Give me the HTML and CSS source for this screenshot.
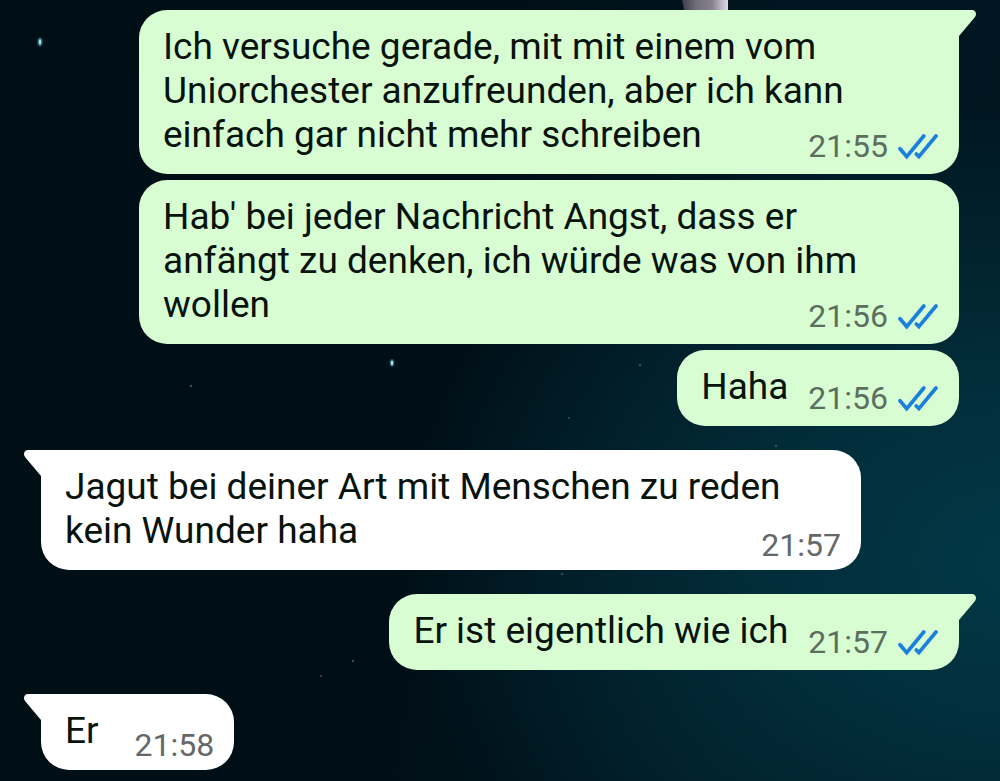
FILE: index.html
```html
<!DOCTYPE html>
<html lang="de">
<head>
<meta charset="utf-8">
<meta name="viewport" content="width=device-width, initial-scale=1">
<title>Chat</title>
<link rel="stylesheet" href="styles.css">
</head>
<body>
<svg class="sky" viewBox="0 0 1000 781" preserveAspectRatio="xMidYMin slice" aria-hidden="true">
  <defs>
    <linearGradient id="plume" x1="0" x2="1" y1="0" y2="0">
      <stop offset="0" stop-color="#3c3b48"/>
      <stop offset=".3" stop-color="#706e79"/>
      <stop offset=".65" stop-color="#85828d"/>
      <stop offset=".85" stop-color="#b9b5c4"/>
      <stop offset="1" stop-color="#dddbe8"/>
    </linearGradient>
  </defs>
  <path d="M682 0h46v14h-43z" fill="url(#plume)"/>
  <ellipse cx="40" cy="42" rx="3" ry="5" fill="#174a59"/>
  <ellipse cx="40" cy="42" rx="1.4" ry="3" fill="#a5e2e5"/>
  <ellipse cx="392" cy="363" rx="2.6" ry="4" fill="#174a59"/>
  <ellipse cx="392" cy="363" rx="1.3" ry="2.4" fill="#b4e2e0"/>
  <g fill="#31505a">
    <circle cx="191" cy="386" r="1.3"/>
    <circle cx="640" cy="365" r="1.3"/>
    <circle cx="569" cy="418" r="1"/>
    <circle cx="776" cy="446" r="1.3"/>
    <circle cx="562" cy="574" r="1.2"/>
    <circle cx="353" cy="661" r="1.2"/>
    <circle cx="321" cy="676" r="1"/>
  </g>
</svg>
<svg class="defs" aria-hidden="true">
  <symbol id="tail" viewBox="0 0 18 27">
    <path d="M0 0H14C17.800 0 19.200 4 16.800 7.200L1 26V27H0Z"/>
  </symbol>
  <symbol id="read" viewBox="0 0 40 26">
    <path d="M2 14.700L8.700 22.600L25.800 2M18.300 20L20.900 22.600L38 2" fill="none" stroke="currentColor" stroke-width="3.700" stroke-linecap="round" stroke-linejoin="miter"/>
  </symbol>
</svg>
<main class="chat">
  <section class="group">
    <article class="bubble sent tailed">
      <svg class="tail" aria-hidden="true"><use href="#tail"/></svg>
      <div class="text">Ich versuche gerade, mit mit einem vom Uniorchester anzufreunden, aber ich kann einfach gar nicht mehr schreiben<span class="meta"><time>21:55</time><svg class="read" role="img" aria-label="Gelesen"><use href="#read"/></svg></span></div>
    </article>
    <article class="bubble sent">
      <div class="text">Hab' bei jeder Nachricht Angst, dass er anfängt zu denken, ich würde was von ihm wollen<span class="meta"><time>21:56</time><svg class="read" role="img" aria-label="Gelesen"><use href="#read"/></svg></span></div>
    </article>
    <article class="bubble sent">
      <div class="text">Haha<span class="meta"><time>21:56</time><svg class="read" role="img" aria-label="Gelesen"><use href="#read"/></svg></span></div>
    </article>
  </section>
  <section class="group">
    <article class="bubble received tailed">
      <svg class="tail" aria-hidden="true"><use href="#tail"/></svg>
      <div class="text">Jagut bei deiner Art mit Menschen zu reden kein Wunder haha<span class="meta"><time>21:57</time></span></div>
    </article>
  </section>
  <section class="group">
    <article class="bubble sent tailed">
      <svg class="tail" aria-hidden="true"><use href="#tail"/></svg>
      <div class="text">Er ist eigentlich wie ich<span class="meta"><time>21:57</time><svg class="read" role="img" aria-label="Gelesen"><use href="#read"/></svg></span></div>
    </article>
  </section>
  <section class="group">
    <article class="bubble received tailed">
      <svg class="tail" aria-hidden="true"><use href="#tail"/></svg>
      <div class="text">Er<span class="meta"><time>21:58</time></span></div>
    </article>
  </section>
</main>
</body>
</html>
```
FILE: styles.css
```css
* {
  box-sizing: border-box;
}

body {
  margin: 0;
  min-height: 100vh;
  position: relative;
  overflow-x: hidden;
  font-family: Roboto, "Liberation Sans", sans-serif;
  background:
    radial-gradient(ellipse 62% 60% at 102% 72%, #023847 0%, #022f3c 35%, transparent 100%),
    linear-gradient(100deg, #000e16 0%, #000f17 45%, #001722 75%, #00141d 100%);
}

.sky {
  position: absolute;
  inset: 0;
  width: 100%;
  height: 100%;
}

.defs {
  position: absolute;
  width: 0;
  height: 0;
}

.chat {
  position: relative;
  display: flex;
  flex-direction: column;
  gap: 24px;
  padding: 10px 41px;
}

.group {
  display: flex;
  flex-direction: column;
  gap: 6px;
}

.bubble {
  position: relative;
  max-width: 82vw;
  padding: 15px 28px 17px 24px;
  border-radius: 28px;
  color: #07130c;
}

.sent {
  --fill: #d8fdd2;
  align-self: flex-end;
  background: var(--fill);
}

.received {
  --fill: #ffffff;
  align-self: flex-start;
  background: var(--fill);
}

.sent.tailed {
  border-top-right-radius: 0;
}

.received.tailed {
  border-top-left-radius: 0;
}

.tail {
  position: absolute;
  top: 0;
  width: 18px;
  height: 27px;
  fill: var(--fill);
}

.sent .tail {
  left: calc(100% - 1px);
}

.received .tail {
  right: calc(100% - 1px);
  transform: scaleX(-1);
}

.text {
  font-size: 37px;
  line-height: 44px;
}

/* floats into the free end of the last line, hanging slightly outside it */
.meta {
  float: right;
  display: flex;
  align-items: center;
  gap: 10px;
  margin: 15px -7px -8px 20px;
  font-size: 32px;
  line-height: 37px;
  color: #5b6f60;
}

.received .meta {
  margin: 18px -8px -11px 36px;
  color: #65686a;
}

.read {
  width: 40px;
  height: 26px;
  color: #1b7fdc;
}
```
